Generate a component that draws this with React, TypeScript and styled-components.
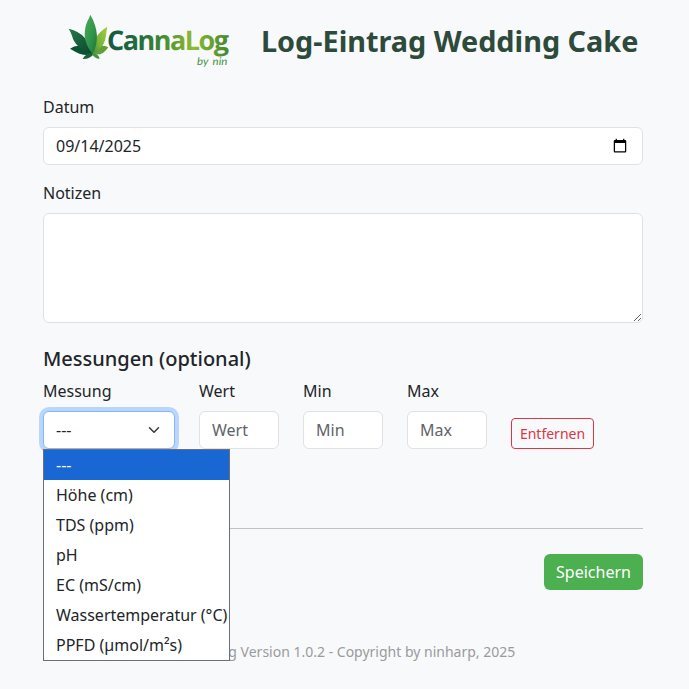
import React from "react";
import styled, { createGlobalStyle, css } from "styled-components";

const GlobalStyle = createGlobalStyle`
  *, *::before, *::after { box-sizing: border-box; }
  html, body { margin: 0; height: 100%; overflow: hidden; }
  body {
    background: #f8f9fb;
    color: #212529;
    font-family: "Noto Sans", "Liberation Sans", sans-serif;
    font-size: 16px;
    line-height: 24px;
  }
`;

const Page = styled.div`
  width: 600px;
  margin-left: 43px;
`;

const Header = styled.header`
  display: flex;
  align-items: flex-start;
  height: 95px;
  padding-left: 17px;
`;

const LogoSvg = styled.svg`
  flex: none;
  margin-top: 5px;
  text-rendering: geometricPrecision;
`;

const Title = styled.h1`
  margin: 20px 0 0 21px;
  font-size: 28.8px;
  line-height: 42px;
  font-weight: 700;
  color: #2d4a3a;
  white-space: nowrap;
`;

const Label = styled.label`
  display: block;
  margin-bottom: 8px;
`;

const Field = styled.div`
  margin-bottom: 16px;
`;

const control = css`
  display: block;
  width: 100%;
  margin: 0;
  padding: 6px 12px;
  border: 1px solid #dee2e6;
  border-radius: 6px;
  background: #fff;
  color: #212529;
  font: inherit;
  outline: none;
`;

const Input = styled.input`
  ${control}
  height: 38px;
  &::placeholder { color: #5f646a; opacity: 1; }
  &::-webkit-date-and-time-value { min-height: 24px; }
  &::-webkit-datetime-edit { padding: 0; }
  &::-webkit-datetime-edit-fields-wrapper { padding: 0; }
  &::-webkit-datetime-edit-month-field,
  &::-webkit-datetime-edit-day-field,
  &::-webkit-datetime-edit-year-field,
  &::-webkit-datetime-edit-text { padding: 0; }
`;

const TextArea = styled.textarea`
  ${control}
  height: 110px;
  resize: vertical;
`;

const SectionTitle = styled.h2`
  margin: 24px 0 8px;
  font-size: 20px;
  line-height: 24px;
  font-weight: 500;
`;

const MeasureRow = styled.div`
  display: flex;
  align-items: flex-end;
  gap: 24px;
`;

const MeasureCell = styled.div<{ $width: number }>`
  position: relative;
  flex: none;
  width: ${(p) => p.$width}px;
`;

const SelectBox = styled.div`
  ${control}
  display: flex;
  align-items: center;
  justify-content: space-between;
  height: 38px;
  border-color: #86b7fe;
  box-shadow: 0 0 0 4px #bbd6fc;
`;

const Options = styled.ul`
  position: absolute;
  z-index: 2;
  top: 100%;
  left: 0;
  width: 187px;
  margin: 0;
  padding: 0;
  border: 1px solid #6c7076;
  background: #fff;
  list-style: none;
`;

const Option = styled.li<{ $selected: boolean }>`
  height: 30px;
  padding-left: 12px;
  line-height: 30px;
  white-space: nowrap;
  color: ${(p) => (p.$selected ? "#fff" : "#212529")};
  background: ${(p) => (p.$selected ? "#1967d2" : "#fff")};
`;

const RemoveButton = styled.button`
  width: 83px;
  height: 31px;
  padding: 0;
  border: 1px solid #dc3545;
  border-radius: 4px;
  background: transparent;
  color: #dc3545;
  font: inherit;
  font-size: 14px;
  line-height: 21px;
`;

const Divider = styled.hr`
  height: 1px;
  margin: 79px 0 25px;
  border: 0;
  background: #bfc1c4;
`;

const Actions = styled.div`
  display: flex;
  justify-content: flex-end;
`;

const SaveButton = styled.button`
  width: 99px;
  height: 36px;
  padding: 0;
  border: 0;
  border-radius: 6px;
  background: #4caf50;
  color: #fff;
  font: inherit;
`;

const Footer = styled.footer`
  margin-top: 51px;
  text-align: center;
  font-size: 14px;
  line-height: 21px;
  color: #999b9d;
`;

const Logo = () => (
  <LogoSvg width="180" height="75" viewBox="0 0 540 225" aria-label="CannaLog by nin">
    <defs>
      <linearGradient id="word" gradientUnits="userSpaceOnUse" x1="140" y1="0" x2="510" y2="0">
        <stop offset="0" stopColor="#14583f" />
        <stop offset="0.25" stopColor="#216c3d" />
        <stop offset="0.42" stopColor="#398436" />
        <stop offset="0.6" stopColor="#6fa834" />
        <stop offset="0.7" stopColor="#8fbd2f" />
        <stop offset="0.8" stopColor="#72aa33" />
        <stop offset="1" stopColor="#43852f" />
      </linearGradient>
      <linearGradient id="mid" x1="0" y1="0" x2="1" y2="1">
        <stop offset="0" stopColor="#4fa957" />
        <stop offset="0.55" stopColor="#30964a" />
        <stop offset="1" stopColor="#1c7439" />
      </linearGradient>
      <linearGradient id="left" x1="0" y1="0" x2="1" y2="1">
        <stop offset="0" stopColor="#2a764a" />
        <stop offset="1" stopColor="#07472f" />
      </linearGradient>
      <linearGradient id="right" x1="1" y1="0" x2="0" y2="1">
        <stop offset="0" stopColor="#a4ce43" />
        <stop offset="0.6" stopColor="#76b438" />
        <stop offset="1" stopColor="#398b3d" />
      </linearGradient>
    </defs>
    <path d="M30 131Q50 116 73 126Q91 133 98 148Q79 153 58 146Q45 140 30 131Z" fill="#0c5334" />
    <path d="M145 127Q121 116 106 132L98 147Q115 152 130 143Q139 136 145 127Z" fill="#639f35" />
    <path d="M68 162Q75 146 96 143L101 148Q89 163 68 162Z" fill="#18643a" />
    <path d="M119 161Q105 162 96 147Q114 142 119 161Z" fill="#469245" />
    <path d="M26 71Q58 79 74 98Q88 116 98 147Q70 139 54 123Q40 109 36 92Q32 80 26 71Z" fill="url(#left)" />
    <path d="M142 65Q139 78 138 92Q135 118 116 135L98 147Q95 125 106 101Q117 80 142 65Z" fill="url(#right)" />
    <path d="M91 29Q100 44 105 61Q115 92 108 120Q105 135 97 147Q76 120 74 91Q74 64 83 47Q88 39 91 29Z" fill="url(#mid)" />
    <text x="141" y="135" textLength="366" lengthAdjust="spacing" fontFamily="'Open Sans'" fontWeight="700" fontSize="81" fill="url(#word)">CannaLog</text>
    <text x="411" y="181" textLength="91" lengthAdjust="spacingAndGlyphs" fontFamily="Lato" fontStyle="italic" fontSize="32" wordSpacing="5" fill="#43913d">by nin</text>
  </LogoSvg>
);

const Chevron = () => (
  <svg width="16" height="12" viewBox="0 0 16 16" aria-hidden="true">
    <path d="m2 5 6 6 6-6" fill="none" stroke="#343a40" strokeWidth="2" strokeLinecap="round" strokeLinejoin="round" />
  </svg>
);

const options = ["---", "Höhe (cm)", "TDS (ppm)", "pH", "EC (mS/cm)", "Wassertemperatur (°C)", "PPFD (µmol/m²s)"];
const values = ["Wert", "Min", "Max"];

export default function App() {
  return (
    <>
      <GlobalStyle />
      <Page>
        <Header>
          <Logo />
          <Title>Log-Eintrag Wedding Cake</Title>
        </Header>
        <Field>
          <Label htmlFor="date">Datum</Label>
          <Input id="date" type="date" defaultValue="2025-09-14" />
        </Field>
        <Field>
          <Label htmlFor="notes">Notizen</Label>
          <TextArea id="notes" />
        </Field>
        <SectionTitle>Messungen (optional)</SectionTitle>
        <MeasureRow>
          <MeasureCell $width={132}>
            <Label>Messung</Label>
            <SelectBox role="combobox" aria-expanded="true">
              <span>---</span>
              <Chevron />
            </SelectBox>
            <Options role="listbox">
              {options.map((o, i) => (
                <Option key={o} role="option" $selected={i === 0}>{o}</Option>
              ))}
            </Options>
          </MeasureCell>
          {values.map((v) => (
            <MeasureCell key={v} $width={80}>
              <Label>{v}</Label>
              <Input placeholder={v} />
            </MeasureCell>
          ))}
          <RemoveButton>Entfernen</RemoveButton>
        </MeasureRow>
        <Divider />
        <Actions>
          <SaveButton>Speichern</SaveButton>
        </Actions>
        <Footer>CannaLog Version 1.0.2 - Copyright by ninharp, 2025</Footer>
      </Page>
    </>
  );
}
